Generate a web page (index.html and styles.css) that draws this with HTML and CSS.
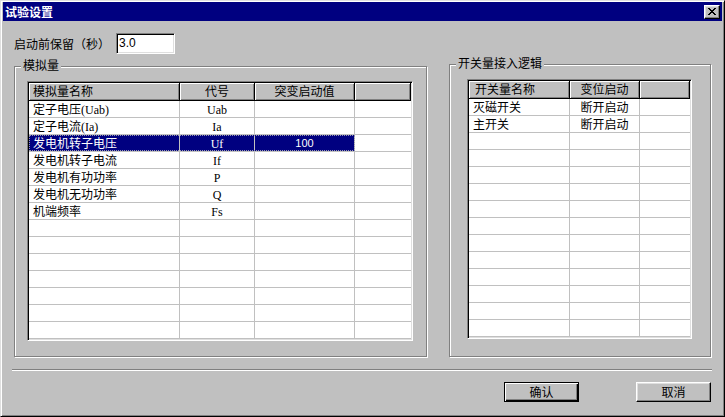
FILE: index.html
```html
<!DOCTYPE html>
<html>
<head>
<meta charset="utf-8">
<title>试验设置</title>
<link rel="stylesheet" href="styles.css">
</head>
<body>
<div class="window">
  <div class="titlebar">
    <span class="title">试验设置</span>
    <span class="close"><svg width="8" height="7" viewBox="0 0 8 7" shape-rendering="crispEdges"><path fill="#000" d="M0 0h2v1h-2z M6 0h2v1h-2z M1 1h2v1h-2z M5 1h2v1h-2z M2 2h4v1h-4z M3 3h2v1h-2z M2 4h4v1h-4z M1 5h2v1h-2z M5 5h2v1h-2z M0 6h2v1h-2z M6 6h2v1h-2z"/></svg></span>
  </div>
  <div class="content">
    <div class="toprow">
      <span class="lbl">启动前保留（秒）</span>
      <div class="edit">3.0</div>
    </div>
    <div class="groups">
      <div class="group group-left">
        <span class="group-title">模拟量</span>
        <div class="grid grid-left">
          <div class="row head"><div class="cell left">模拟量名称</div><div class="cell">代号</div><div class="cell">突变启动值</div><div class="cell"></div></div>
          <div class="row"><div class="cell left">定子电压<span class="lat">(Uab)</span></div><div class="cell"><span class="lat">Uab</span></div><div class="cell"></div><div class="cell"></div></div>
          <div class="row"><div class="cell left">定子电流<span class="lat">(Ia)</span></div><div class="cell"><span class="lat">Ia</span></div><div class="cell"></div><div class="cell"></div></div>
          <div class="row sel"><div class="cell left">发电机转子电压</div><div class="cell"><span class="lat">Uf</span></div><div class="cell num">100</div><div class="cell"></div></div>
          <div class="row"><div class="cell left">发电机转子电流</div><div class="cell"><span class="lat">If</span></div><div class="cell"></div><div class="cell"></div></div>
          <div class="row"><div class="cell left">发电机有功功率</div><div class="cell"><span class="lat">P</span></div><div class="cell"></div><div class="cell"></div></div>
          <div class="row"><div class="cell left">发电机无功功率</div><div class="cell"><span class="lat">Q</span></div><div class="cell"></div><div class="cell"></div></div>
          <div class="row"><div class="cell left">机端频率</div><div class="cell"><span class="lat">Fs</span></div><div class="cell"></div><div class="cell"></div></div>
          <div class="row"><div class="cell left"></div><div class="cell"></div><div class="cell"></div><div class="cell"></div></div>
          <div class="row"><div class="cell left"></div><div class="cell"></div><div class="cell"></div><div class="cell"></div></div>
          <div class="row"><div class="cell left"></div><div class="cell"></div><div class="cell"></div><div class="cell"></div></div>
          <div class="row"><div class="cell left"></div><div class="cell"></div><div class="cell"></div><div class="cell"></div></div>
          <div class="row"><div class="cell left"></div><div class="cell"></div><div class="cell"></div><div class="cell"></div></div>
          <div class="row"><div class="cell left"></div><div class="cell"></div><div class="cell"></div><div class="cell"></div></div>
          <div class="row"><div class="cell left"></div><div class="cell"></div><div class="cell"></div><div class="cell"></div></div>
        </div>
      </div>
      <div class="group group-right">
        <span class="group-title">开关量接入逻辑</span>
        <div class="grid grid-right">
          <div class="row head"><div class="cell left hl">开关量名称</div><div class="cell">变位启动</div><div class="cell"></div></div>
          <div class="row"><div class="cell left">灭磁开关</div><div class="cell">断开启动</div><div class="cell"></div></div>
          <div class="row"><div class="cell left">主开关</div><div class="cell">断开启动</div><div class="cell"></div></div>
          <div class="row"><div class="cell"></div><div class="cell"></div><div class="cell"></div></div>
          <div class="row"><div class="cell"></div><div class="cell"></div><div class="cell"></div></div>
          <div class="row"><div class="cell"></div><div class="cell"></div><div class="cell"></div></div>
          <div class="row"><div class="cell"></div><div class="cell"></div><div class="cell"></div></div>
          <div class="row"><div class="cell"></div><div class="cell"></div><div class="cell"></div></div>
          <div class="row"><div class="cell"></div><div class="cell"></div><div class="cell"></div></div>
          <div class="row"><div class="cell"></div><div class="cell"></div><div class="cell"></div></div>
          <div class="row"><div class="cell"></div><div class="cell"></div><div class="cell"></div></div>
          <div class="row"><div class="cell"></div><div class="cell"></div><div class="cell"></div></div>
          <div class="row"><div class="cell"></div><div class="cell"></div><div class="cell"></div></div>
          <div class="row"><div class="cell"></div><div class="cell"></div><div class="cell"></div></div>
          <div class="row"><div class="cell"></div><div class="cell"></div><div class="cell"></div></div>
        </div>
      </div>
    </div>
    <div class="sep"></div>
    <div class="buttons">
      <div class="btn default">确认</div>
      <div class="btn">取消</div>
    </div>
  </div>
</div>
</body>
</html>
```
FILE: styles.css
```css
html, body {
  margin: 0;
  padding: 0;
}
body {
  width: 725px;
  height: 417px;
  overflow: hidden;
  background: #c0c0c0;
  font-family: "Noto Sans CJK SC", "Liberation Sans", sans-serif;
  font-size: 12px;
  color: #000;
}
.window {
  box-sizing: border-box;
  width: 725px;
  height: 417px;
  overflow: hidden;
  background: #c0c0c0;
  border: 1px solid;
  border-color: #dfdfdf #000 #000 #dfdfdf;
  box-shadow: inset 1px 1px #fff, inset -1px -1px #808080;
  padding: 1px 2px 2px 2px;
}
.titlebar {
  height: 19px;
  background: #000080;
  color: #fff;
  display: flex;
  align-items: center;
  justify-content: space-between;
  padding-left: 2px;
}
.title {
  font-weight: bold;
  font-size: 12px;
  line-height: 19px;
}
.close {
  box-sizing: border-box;
  width: 16px;
  height: 14px;
  margin-right: 2px;
  background: #c0c0c0;
  border: 1px solid;
  border-color: #fff #000 #000 #fff;
  box-shadow: inset -1px -1px #808080, inset 1px 1px #dfdfdf;
  display: flex;
  align-items: center;
  justify-content: center;
}
.close svg {
  display: block;
}
.content {
  padding: 12px 11px 0 11px;
}
.toprow {
  display: flex;
  align-items: center;
  height: 21px;
}
.lbl {
  width: 102px;
  line-height: 14px;
  white-space: nowrap;
}
.edit {
  box-sizing: border-box;
  width: 59px;
  height: 21px;
  background: #fff;
  border: 1px solid;
  border-color: #808080 #fff #fff #808080;
  box-shadow: inset 1px 1px #000, inset -1px -1px #dfdfdf;
  padding: 0 2px;
  line-height: 19px;
  font-family: "Liberation Sans", sans-serif;
  font-size: 12px;
}
.groups {
  margin-top: 10px;
  display: flex;
  align-items: flex-end;
  gap: 22px;
}
.group {
  position: relative;
  box-sizing: border-box;
  border: 1px solid #808080;
  box-shadow: inset 1px 1px #fff, 1px 1px #fff;
}
.group-left {
  width: 413px;
  height: 291px;
  padding: 14px 0 0 12px;
}
.group-right {
  width: 262px;
  height: 293px;
  padding: 14px 0 0 17px;
}
.group-title {
  position: absolute;
  top: -9px;
  left: 6px;
  padding: 0 2px;
  background: #c0c0c0;
  line-height: 14px;
  white-space: nowrap;
}
.grid {
  box-sizing: border-box;
  height: 260px;
  background: #fff;
  border: 1px solid;
  border-color: #808080 #fff #fff #808080;
  box-shadow: inset 1px 1px #000, inset -1px -1px #dfdfdf;
  padding: 1px;
  overflow: hidden;
}
.grid-left {
  width: 386px;
}
.grid-right {
  width: 225px;
}
.row {
  display: grid;
  box-sizing: border-box;
  height: 17px;
  border-bottom: 1px solid #c0c0c0;
}
.grid-left .row {
  grid-template-columns: 151px 75px 100px 56px;
}
.grid-right .row {
  grid-template-columns: 101px 70px 50px;
}
.cell {
  box-sizing: border-box;
  border-right: 1px solid #c0c0c0;
  text-align: center;
  line-height: 16px;
  white-space: nowrap;
  overflow: hidden;
}
.cell:last-child {
  border-right: none;
}
.cell.left {
  text-align: left;
  padding-left: 4px;
}
.row.head {
  height: 18px;
  border-bottom: none;
  background: #c0c0c0;
}
.row.head .cell {
  border-right: 1px solid #000;
  border-bottom: 1px solid #000;
  box-shadow: inset 1px 1px #fff, inset -1px -1px #808080;
  line-height: 16px;
}
.row.head .cell.hl {
  padding-left: 6px;
}
.lat {
  font-family: "Liberation Serif", serif;
  font-size: 12px;
}
.num {
  font-family: "Liberation Sans", sans-serif;
  font-size: 11px;
}
.row.sel {
  position: relative;
}
.row.sel .cell:nth-child(-n+3) {
  background: #000080;
  color: #fff;
}
.row.sel::after {
  content: "";
  position: absolute;
  left: 0;
  top: 0;
  width: 326px;
  height: 16px;
  box-sizing: border-box;
  border: 1px dotted #9a9ab0;
}
.sep {
  margin: 12px -1px 0 -2px;
  height: 0;
  border-top: 1px solid #808080;
  border-bottom: 1px solid #fff;
}
.buttons {
  margin-top: 11px;
  display: flex;
  justify-content: flex-end;
  gap: 57px;
}
.btn {
  box-sizing: border-box;
  width: 75px;
  height: 20px;
  background: #c0c0c0;
  border: 1px solid;
  border-color: #fff #000 #000 #fff;
  box-shadow: inset -1px -1px #808080, inset 1px 1px #dfdfdf;
  display: flex;
  align-items: center;
  justify-content: center;
  line-height: 14px;
}
.btn.default {
  border-color: #000;
  box-shadow: inset 1px 1px #fff, inset -1px -1px #000, inset -2px -2px #808080;
}
```
